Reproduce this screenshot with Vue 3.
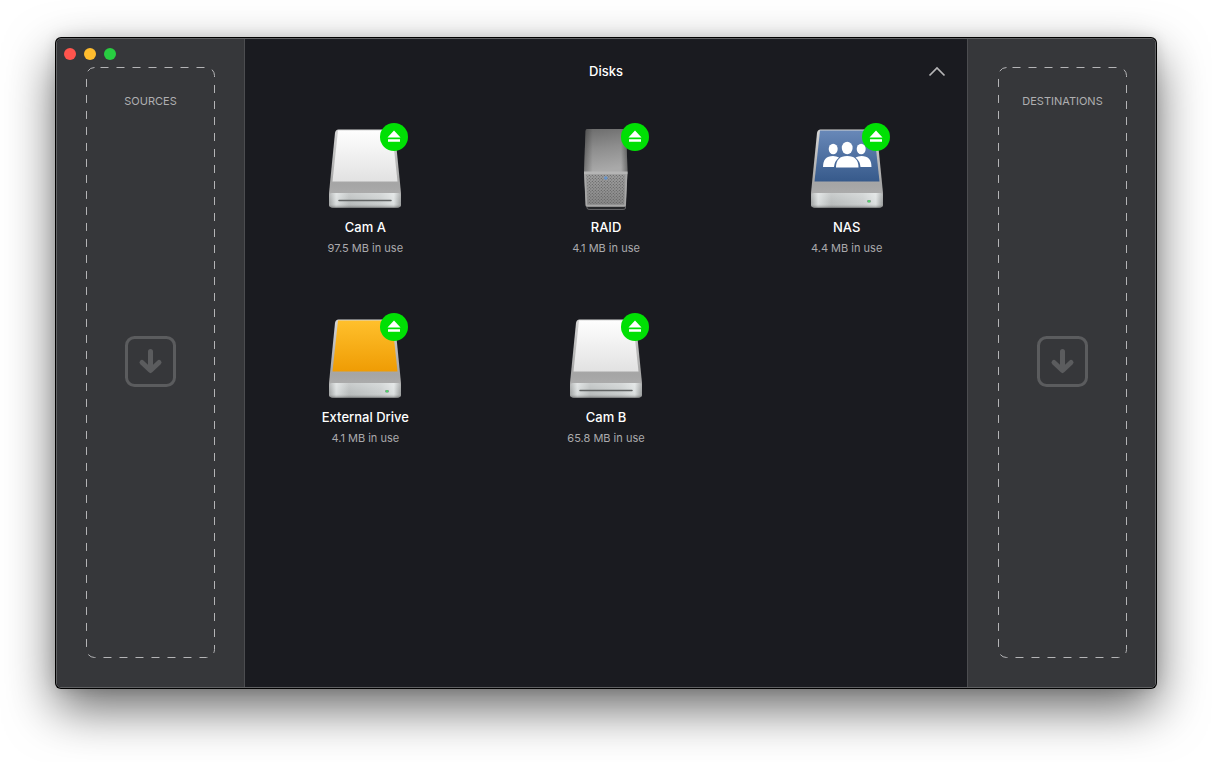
<script setup>
const disks = [
  { name: 'Cam A', usage: '97.5 MB in use', kind: 'card' },
  { name: 'RAID', usage: '4.1 MB in use', kind: 'tower' },
  { name: 'NAS', usage: '4.4 MB in use', kind: 'network' },
  { name: 'External Drive', usage: '4.1 MB in use', kind: 'external' },
  { name: 'Cam B', usage: '65.8 MB in use', kind: 'card' },
]
const faces = { card: 'url(#face-card)', network: 'url(#face-network)', external: 'url(#face-external)' }
</script>

<template>
  <div class="desktop">
    <svg class="defs" aria-hidden="true">
      <defs>
        <linearGradient id="face-card" x1="0" y1="0" x2="0" y2="1">
          <stop offset="0" stop-color="#fefefe" />
          <stop offset="1" stop-color="#e2e2e2" />
        </linearGradient>
        <linearGradient id="face-network" x1="0" y1="0" x2="0" y2="1">
          <stop offset="0" stop-color="#6888b8" />
          <stop offset="1" stop-color="#375a8b" />
        </linearGradient>
        <linearGradient id="face-external" x1="0" y1="0" x2="0" y2="1">
          <stop offset="0" stop-color="#ffc02c" />
          <stop offset="1" stop-color="#ef9c04" />
        </linearGradient>
        <linearGradient id="shell" x1="0" y1="0" x2="0" y2="1">
          <stop offset="0" stop-color="#d6d6d6" />
          <stop offset="0.7" stop-color="#a5a5a5" />
          <stop offset="1" stop-color="#b4b4b4" />
        </linearGradient>
        <linearGradient id="lip" x1="0" y1="0" x2="1" y2="0">
          <stop offset="0" stop-color="#a0a3a3" />
          <stop offset="0.1" stop-color="#dadede" />
          <stop offset="0.28" stop-color="#b9bdbd" />
          <stop offset="0.72" stop-color="#cacece" />
          <stop offset="0.9" stop-color="#dde1e1" />
          <stop offset="1" stop-color="#9a9d9d" />
        </linearGradient>
        <linearGradient id="lip-shade" x1="0" y1="0" x2="0" y2="1">
          <stop offset="0" stop-color="#fff" stop-opacity="0.25" />
          <stop offset="0.7" stop-color="#fff" stop-opacity="0" />
          <stop offset="1" stop-color="#000" stop-opacity="0.3" />
        </linearGradient>
        <linearGradient id="tower-top" x1="0" y1="0" x2="0.15" y2="1">
          <stop offset="0" stop-color="#6c6c6c" />
          <stop offset="0.5" stop-color="#8e8e8e" />
          <stop offset="1" stop-color="#a9a9a9" />
        </linearGradient>
        <linearGradient id="tower-sides" x1="0" y1="0" x2="1" y2="0">
          <stop offset="0" stop-color="#000" stop-opacity="0.3" />
          <stop offset="0.2" stop-color="#000" stop-opacity="0" />
          <stop offset="0.85" stop-color="#000" stop-opacity="0" />
          <stop offset="1" stop-color="#000" stop-opacity="0.35" />
        </linearGradient>
        <linearGradient id="tower-front" x1="0" y1="0" x2="0" y2="1">
          <stop offset="0" stop-color="#a2a2a2" />
          <stop offset="1" stop-color="#868686" />
        </linearGradient>
        <pattern id="mesh" width="3" height="3" patternUnits="userSpaceOnUse">
          <circle cx="0.8" cy="0.8" r="0.6" fill="#5c5c5c" />
          <circle cx="2.3" cy="2.3" r="0.6" fill="#5c5c5c" />
        </pattern>
      </defs>
    </svg>

    <div class="window">
      <aside class="side sources">
        <div class="bar">
          <button class="light close" aria-label="Close"></button>
          <button class="light minimize" aria-label="Minimize"></button>
          <button class="light zoom" aria-label="Zoom"></button>
        </div>
        <section class="drop">
          <svg class="outline" aria-hidden="true"><rect x="0.5" y="0.5" rx="8" /></svg>
          <h2>SOURCES</h2>
          <svg class="arrow" viewBox="0 0 51 51" aria-hidden="true">
            <rect x="1.5" y="1.5" width="48" height="48" rx="8" stroke-width="3" />
            <path d="M25.5 15.500V34M17 26.500L25.500 34.500L34 26.500" stroke-width="5" />
          </svg>
        </section>
      </aside>

      <main class="content">
        <header class="head">
          <h1>Disks</h1>
          <button class="collapse" aria-label="Collapse disks">
            <svg viewBox="0 0 18 12" aria-hidden="true"><path d="M1.500 10.500L9 3L16.500 10.500" /></svg>
          </button>
        </header>
        <ul class="grid">
          <li v-for="disk in disks" :key="disk.name" class="disk">
            <div class="picture">
              <svg v-if="disk.kind === 'tower'" viewBox="0 0 80 90" aria-hidden="true">
                <path d="M21 81H59.500V83Q59.500 84.500 57 84.500H24Q21 84.500 21 83Z" fill="#26272a" stroke="#626265" stroke-width="1" />
                <path d="M18 47H61.500L60 80Q59.800 82 58 82H21.500Q19.700 82 19.500 80Z" fill="url(#tower-front)" />
                <path d="M21 4H58.500Q60 4 60.200 6L61.500 47H18L19.500 6Q19.700 4 21 4Z" fill="url(#tower-top)" />
                <path d="M21 4H58.500Q60 4 60.200 6L61.500 47H18L19.500 6Q19.700 4 21 4Z" fill="url(#tower-sides)" />
                <path d="M18 46.500H61.500V49H18Z" fill="#b5b5b5" />
                <path d="M20.500 50H59L57.500 79H22Z" fill="url(#mesh)" />
                <path d="M19 49L20.500 80.500H59L60.500 49" fill="none" stroke="#a8a8a8" stroke-width="1.500" />
                <circle cx="39.800" cy="53" r="1.800" fill="#6996cc" />
              </svg>
              <svg v-else viewBox="0 0 80 90" aria-hidden="true">
                <path d="M13.500 4.500H66.500Q69.500 4.500 70 8L76 68V79Q76 82.500 72.500 82.500H7.500Q4 82.500 4 79V68L10 8Q10.500 4.500 13.500 4.500Z" fill="url(#shell)" />
                <path d="M13 5.500H67L72.500 56.500H7.500Z" :fill="faces[disk.kind]" />
                <path d="M4 71Q4 68 7 68H73Q76 68 76 71V79Q76 82.500 72.500 82.500H7.500Q4 82.500 4 79Z" fill="url(#lip)" />
                <path d="M4 71Q4 68 7 68H73Q76 68 76 71V79Q76 82.500 72.500 82.500H7.500Q4 82.500 4 79Z" fill="url(#lip-shade)" />
                <path v-if="disk.kind === 'card'" d="M14 75.500H66" fill="none" stroke="#626565" stroke-width="1.500" stroke-linecap="round" />
                <g v-else>
                  <rect x="60" y="75" width="4" height="2.500" rx="1" fill="#909797" />
                  <circle cx="62" cy="76.200" r="1.200" fill="#4fd668" />
                </g>
                <g v-if="disk.kind === 'network'" fill="#fff">
                  <ellipse cx="26.200" cy="24" rx="4.500" ry="5.200" />
                  <ellipse cx="54.200" cy="24" rx="4.500" ry="5.200" />
                  <path d="M16 42Q16 31 26 31Q29.500 31 32 32.500Q27.500 36 27 42Z" />
                  <path d="M64.500 42Q64.500 31 54.500 31Q51 31 48.500 32.500Q53 36 53.500 42Z" />
                  <ellipse cx="40.200" cy="23" rx="5.400" ry="6.200" />
                  <path d="M29 42.500Q29 31 40.200 31Q51.500 31 51.500 42.500Z" />
                </g>
              </svg>
              <button class="eject" :aria-label="'Eject ' + disk.name">
                <svg viewBox="0 0 28 28" aria-hidden="true"><path d="M14 7.500L20.500 14.500H7.500ZM8 16.200H20V18.700H8Z" /></svg>
              </button>
            </div>
            <h3>{{ disk.name }}</h3>
            <p>{{ disk.usage }}</p>
          </li>
        </ul>
      </main>

      <aside class="side destinations">
        <div class="bar"></div>
        <section class="drop">
          <svg class="outline" aria-hidden="true"><rect x="0.5" y="0.5" rx="8" /></svg>
          <h2>DESTINATIONS</h2>
          <svg class="arrow" viewBox="0 0 51 51" aria-hidden="true">
            <rect x="1.5" y="1.5" width="48" height="48" rx="8" stroke-width="3" />
            <path d="M25.5 15.500V34M17 26.500L25.500 34.500L34 26.500" stroke-width="5" />
          </svg>
        </section>
      </aside>
    </div>
  </div>
</template>

<style>
body {
  margin: 0;
  background: #fff;
}
</style>

<style scoped>
* {
  box-sizing: border-box;
}
h1, h2, h3, p, ul {
  margin: 0;
  padding: 0;
}
button {
  padding: 0;
  border: 0;
  background: none;
}
.desktop {
  display: flex;
  min-height: 100vh;
  padding: 38px 56px 74px;
  font-family: Inter, "Liberation Sans", sans-serif;
  overflow: hidden;
}
.defs {
  position: absolute;
  width: 0;
  height: 0;
}
.window {
  flex: 1;
  display: flex;
  border: 1px solid #606163;
  border-radius: 5px;
  background: #1a1b20;
  box-shadow: 0 0 0 1px #000, 0 20px 50px rgba(0, 0, 0, 0.6), 0 0 14px rgba(0, 0, 0, 0.15);
}
.side {
  flex: 0 0 188px;
  display: flex;
  flex-direction: column;
  background: #36373a;
}
.sources {
  padding: 0 29px 29px;
  border-right: 1px solid #4c4d50;
  border-radius: 4px 0 0 4px;
}
.destinations {
  padding: 0 28px 29px 30px;
  border-left: 1px solid #4c4d50;
  border-radius: 0 4px 4px 0;
}
.bar {
  display: flex;
  gap: 8px;
  height: 28px;
  padding-top: 9px;
  margin-left: -22px;
}
.light {
  width: 12px;
  height: 12px;
  border-radius: 50%;
}
.close {
  background: #ff544d;
}
.minimize {
  background: #ffbd2e;
}
.zoom {
  background: #28cd41;
}
.drop {
  position: relative;
  flex: 1;
  display: grid;
  grid-template-rows: 1fr auto 1fr;
  justify-items: center;
  padding-bottom: 2px;
}
.outline {
  position: absolute;
  inset: 0;
  width: 100%;
  height: 100%;
}
.outline rect {
  width: calc(100% - 1px);
  height: calc(100% - 1px);
  fill: none;
  stroke: #b4b4b6;
  stroke-width: 1px;
  stroke-dasharray: 8 8;
  stroke-dashoffset: 10px;
}
.drop h2 {
  padding-top: 26px;
  font-size: 11px;
  line-height: 16px;
  font-weight: 400;
  color: #afafb1;
}
.arrow {
  width: 51px;
  height: 51px;
  fill: none;
  stroke: #5b5c5e;
  stroke-linecap: round;
  stroke-linejoin: round;
}
.content {
  flex: 1;
  min-width: 0;
}
.head {
  display: grid;
  grid-template-columns: 1fr auto 1fr;
  align-items: center;
  height: 64px;
  padding: 0 20px;
}
.head h1 {
  grid-column: 2;
  font-size: 13px;
  line-height: 20px;
  font-weight: 500;
  color: #fff;
}
.collapse {
  justify-self: end;
  display: grid;
  place-items: center;
  width: 20px;
  height: 20px;
}
.collapse svg {
  width: 18px;
  height: 12px;
  fill: none;
  stroke: #b5b5b7;
  stroke-width: 1.7;
}
.grid {
  display: grid;
  grid-template-columns: repeat(3, 1fr);
  grid-auto-rows: 190px;
  list-style: none;
}
.disk {
  display: flex;
  flex-direction: column;
  align-items: center;
  padding-top: 22px;
}
.picture {
  position: relative;
  width: 80px;
  height: 90px;
}
.picture > svg {
  display: block;
  width: 80px;
  height: 90px;
}
.eject {
  position: absolute;
  top: -2px;
  right: -3px;
  width: 28px;
  height: 28px;
  border-radius: 50%;
  background: #00e004;
}
.eject svg {
  display: block;
  width: 28px;
  height: 28px;
  fill: #fff;
}
.disk h3 {
  font-size: 13px;
  line-height: 24px;
  font-weight: 500;
  color: #fff;
}
.disk p {
  font-size: 11px;
  line-height: 18px;
  color: #aaaaad;
}
</style>
